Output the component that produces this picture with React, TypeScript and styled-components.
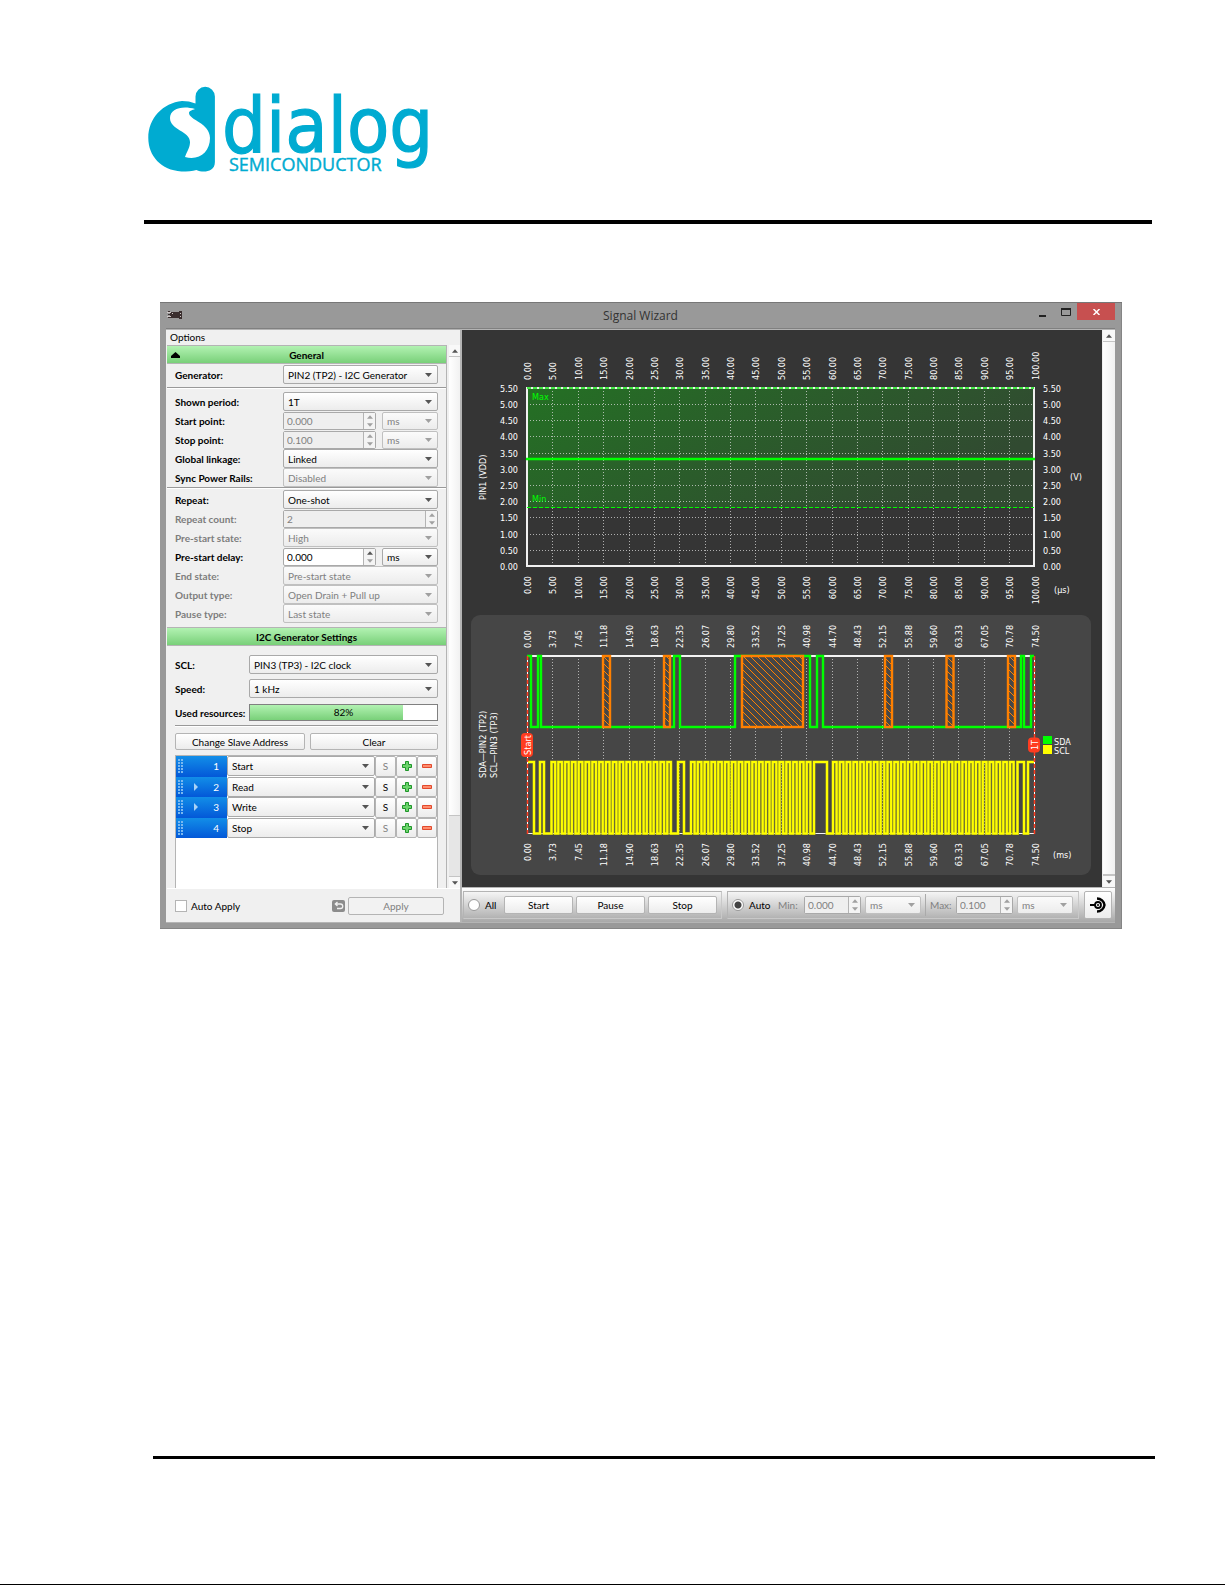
import React from "react";
import styled, { createGlobalStyle, css } from "styled-components";

const GlobalStyle = createGlobalStyle`
  *, *::before, *::after { box-sizing: border-box; }
  body { margin: 0; background: #fff; }
  button, input, select { font: inherit; color: inherit; margin: 0; }
`;

const uiFont = `Lato, "Open Sans", sans-serif`;
const plotFont = `"DejaVu Sans Condensed", "DejaVu Sans", sans-serif`;
const face = "linear-gradient(#ffffff, #ececec)";

/* ---------- document page ---------- */

const Page = styled.div`
  display: flex;
  flex-direction: column;
  min-height: 100vh;
  border-bottom: 1px solid #000;
  font-family: ${uiFont};
  font-size: 10px;
  line-height: 14px;
  color: #000;
`;

const PageHeader = styled.header`
  margin: 0 73px 0 144px;
  padding: 84px 0 42px 2px;
  border-bottom: 4px solid #000;
`;

const LogoSvg = styled.svg`
  display: block;
  width: 290px;
  height: 94px;
`;

const FooterRule = styled.hr`
  width: auto;
  height: 3px;
  margin: auto 70px 125px 153px;
  border: 0;
  background: #000;
`;

/* ---------- window ---------- */

const Window = styled.main`
  margin: 78px 103px 40px 160px;
  padding: 0 7px 6px 6px;
  background: #999;
  border-top: 1px solid #777;
  box-shadow: inset -1px -1px 0 #858585;
`;

const TitleBar = styled.div`
  display: grid;
  grid-template-columns: 1fr auto 1fr;
  height: 26px;
  border-bottom: 1px solid #808080;
`;

const TitleIcon = styled.svg`
  width: 16px;
  height: 10px;
  margin: 7px 0 0 1px;
`;

const Title = styled.h1`
  margin: 0;
  font: 400 12px/26px "Open Sans", sans-serif;
  color: #333;
`;

const WindowButtons = styled.div`
  display: flex;
  justify-content: flex-end;
`;

const WindowButton = styled.button<{ $close?: boolean }>`
  display: flex;
  align-items: center;
  justify-content: center;
  width: ${(p) => (p.$close ? 38 : 23)}px;
  height: 17px;
  padding: 0;
  border: 0;
  background: ${(p) => (p.$close ? "#c75050" : "transparent")};
`;

const Body = styled.div`
  display: flex;
  height: 594px;
  border: 1px solid #b4b4b4;
  border-width: 1px 0;
`;

/* ---------- left panel ---------- */

const SidePanel = styled.section`
  display: flex;
  flex-direction: column;
  width: 296px;
  flex: none;
  padding-left: 1px;
  background: #f0f0f0;
  border-right: 2px solid #b4b4b4;
`;

const MenuButton = styled.button`
  align-self: flex-start;
  height: 15px;
  padding: 0 3px;
  border: 0;
  background: none;
  line-height: 15px;
`;

const ScrollArea = styled.div`
  display: flex;
  flex: 1;
  min-height: 0;
  overflow: hidden;
`;

const Settings = styled.form`
  display: flex;
  flex-direction: column;
  flex: 1;
  border-right: 1px solid #b4b4b4;
`;

const SectionTitle = styled.h2`
  display: grid;
  grid-template-columns: 1fr auto 1fr;
  align-items: center;
  height: 19px;
  margin: 0;
  padding: 0 4px;
  font-size: 10px;
  font-weight: 700;
  background: linear-gradient(#b2f2b2, #79d079);
  border: 1px solid #b4b4b4;
  border-width: 1px 0;
`;

const Group = styled.div<{ $top?: number; $bottom?: number; $gap?: number }>`
  display: flex;
  flex-direction: column;
  gap: ${(p) => p.$gap ?? 0}px;
  padding: ${(p) => p.$top ?? 0}px 8px ${(p) => p.$bottom ?? 0}px 8px;
`;

const Divider = styled.hr<{ $inset?: boolean }>`
  width: auto;
  height: 2px;
  margin: ${(p) => (p.$inset ? "0 8px" : "0")};
  border: 0;
  border-top: 1px solid #999;
  background: #fff;
`;

const Row = styled.div<{ $label?: number; $muted?: boolean }>`
  display: grid;
  grid-template-columns: ${(p) => p.$label ?? 108}px 1fr;
  align-items: center;
  height: 19px;
  label { font-weight: 700; white-space: nowrap; color: ${(p) => (p.$muted ? "#7d7d7d" : "#000")}; }
`;

const Pair = styled.div`
  display: flex;
  gap: 6px;
`;

const SelectBox = styled.div<{ $width?: number; $off?: boolean }>`
  display: grid;
  grid-template-columns: 1fr 20px;
  align-items: center;
  ${(p) => (p.$width ? css`width: ${p.$width}px; flex: none;` : css`width: 100%;`)}
  min-width: 0;
  color: ${(p) => (p.$off ? "#808080" : "#000")};
  svg {
    grid-area: 1 / 2;
    justify-self: center;
    pointer-events: none;
    fill: ${(p) => (p.$off ? "#a0a0a0" : "#555")};
  }
`;

const SelectField = styled.select<{ $h?: number }>`
  grid-area: 1 / 1 / 2 / 3;
  appearance: none;
  width: 100%;
  height: ${(p) => p.$h ?? 19}px;
  padding: 0 16px 0 4px;
  border: 1px solid #a9a9a9;
  border-radius: 2px;
  background: ${face};
  opacity: 1;
  &:disabled { color: #808080; border-color: #c0c0c0; background: linear-gradient(#fbfbfb, #ececec); }
`;

const SpinBox = styled.div<{ $width?: number }>`
  display: flex;
  ${(p) => (p.$width ? css`width: ${p.$width}px; flex: none;` : css`width: 100%;`)}
  height: 18px;
  border: 1px solid #a9a9a9;
  border-radius: 2px;
  background: #fff;
`;

const SpinInput = styled.input`
  flex: 1;
  width: 0;
  padding: 0 3px;
  border: 0;
  background: none;
  &:disabled { color: #808080; background: #efefef; }
`;

const SpinButtons = styled.div`
  display: flex;
  flex-direction: column;
  width: 12px;
  border-left: 1px solid #b4b4b4;
  background: #f4f4f4;
`;

const SpinButton = styled.button`
  display: flex;
  flex: 1;
  align-items: center;
  justify-content: center;
  min-height: 0;
  padding: 0;
  border: 0;
  background: none;
  line-height: 0;
`;

const Progress = styled.div`
  display: grid;
  height: 17px;
  border: 1px solid #808080;
  background: #fff;
  text-align: center;
  line-height: 15px;
`;

const ProgressFill = styled.div`
  grid-area: 1 / 1;
  background: linear-gradient(#b2f2b2, #79d079);
`;

const ProgressText = styled.output`
  grid-area: 1 / 1;
`;

const Buttons = styled.div`
  display: grid;
  grid-template-columns: 130px 1fr;
  gap: 5px;
`;

const PushButton = styled.button<{ $w?: number; $h?: number }>`
  ${(p) => p.$w && css`width: ${p.$w}px;`}
  height: ${(p) => p.$h ?? 17}px;
  padding: 0;
  border: 1px solid #b4b4b4;
  border-radius: 2px;
  background: ${face};
  line-height: 14px;
  &:disabled { color: #808080; background: #f2f2f2; }
`;

const CommandList = styled.div`
  flex: 1;
  min-height: 0;
  margin: 5px 8px 0;
  border: 1px solid #b4b4b4;
  border-bottom: 0;
  background: #fff;
  overflow: hidden;
`;

const CommandRows = styled.div`
  display: grid;
  grid-auto-rows: 1fr;
  height: 82px;
`;

const CommandRow = styled.div`
  display: grid;
  grid-template-columns: 51px 1fr 21px 21px 20px;
`;

const CommandIndex = styled.div`
  display: grid;
  grid-template-columns: 16px 1fr auto;
  align-items: center;
  padding: 0 8px 0 2px;
  color: #fff;
  background: linear-gradient(#128ee8, #0358d8);
`;

const CommandButton = styled.button<{ $muted?: boolean }>`
  display: flex;
  align-items: center;
  justify-content: center;
  padding: 0;
  border: 1px solid #b4b4b4;
  border-radius: 2px;
  background: ${face};
  color: ${(p) => (p.$muted ? "#808080" : "#000")};
`;

const ApplyBar = styled.div`
  display: flex;
  align-items: center;
  height: 34px;
  padding: 0 16px 0 8px;
  border-top: 1px solid #fff;
`;

const CheckLabel = styled.label`
  display: flex;
  align-items: center;
  gap: 4px;
  flex: 1;
`;

const CheckInput = styled.input`
  appearance: none;
  width: 12px;
  height: 12px;
  border: 1px solid #b4b4b4;
  background: #fff;
`;

const IconButton = styled.button`
  display: flex;
  padding: 0;
  margin-right: 3px;
  border: 0;
  background: none;
`;

const ScrollTrack = styled.div`
  display: flex;
  flex-direction: column;
  width: 12px;
  flex: none;
  background: #e6e6e6;
`;

const ScrollSlot = styled.div<{ $gap: number }>`
  display: flex;
  flex: none;
  padding-left: ${(p) => p.$gap}px;
  background: #f0f0f0;
`;

const ScrollButton = styled.button`
  display: flex;
  align-items: center;
  justify-content: center;
  height: 12px;
  padding: 0;
  border: 1px solid #c4c4c4;
  border-width: 0 0 1px 0;
  background: #f8f8f8;
  &:last-child { border-width: 1px 0 0 0; margin-top: auto; }
`;

const ScrollThumb = styled.div<{ $grow: number }>`
  flex: ${(p) => p.$grow} 0 0;
  border-bottom: 1px solid #c4c4c4;
  background: linear-gradient(90deg, #fff, #f0f0f0);
`;

const ScrollRest = styled.div<{ $grow: number }>`
  flex: ${(p) => p.$grow} 0 0;
`;

/* ---------- right panel ---------- */

const PlotPanel = styled.section`
  display: flex;
  flex-direction: column;
  flex: 1;
  min-width: 0;
`;

const PlotScroll = styled.div`
  display: flex;
  flex: 1;
  min-height: 0;
  overflow: hidden;
`;

const Plots = styled.div`
  flex: 1;
  min-width: 0;
  background: #353535;
`;

const PlotSvg = styled.svg`
  display: block;
  width: 100%;
  height: auto;
  text { font-family: ${plotFont}; font-size: 9px; fill: #fff; }
`;

const LimitText = styled.text`
  && { fill: #0f0; }
`;

const PlotCard = styled.div`
  margin: 0 11px 0 9px;
  border-radius: 9px;
  background: #464646;
`;

const ControlBar = styled.div`
  display: flex;
  gap: 5px;
  height: 35px;
  padding: 3px 3px 3px 1px;
  border-top: 1px solid #b4b4b4;
  background: linear-gradient(#fff, #d8d8d8 45%, #a8a8a8);
`;

const ControlGroup = styled.div<{ $grow?: boolean }>`
  display: flex;
  align-items: center;
  gap: ${(p) => (p.$grow ? 4 : 3)}px;
  ${(p) => p.$grow && css`flex: 1;`}
  padding: 0 4px;
  border: 1px solid #b4b4b4;
  border-right-color: #c8c8c8;
  border-bottom-color: #c8c8c8;
`;

const RadioLabel = styled.label<{ $w: number }>`
  display: flex;
  align-items: center;
  gap: 5px;
  width: ${(p) => p.$w}px;
`;

const RadioInput = styled.input`
  appearance: none;
  width: 12px;
  height: 12px;
  border: 1px solid #999;
  border-radius: 50%;
  background: #fff;
  &:checked { background: radial-gradient(circle, #444 0 3px, #fff 4px); }
`;

const RangeLabel = styled.label`
  width: 22px;
  color: #808080;
`;

const RangeDivider = styled.span`
  align-self: stretch;
  width: 1px;
  margin: 2px 0;
  background: #aaa;
`;

const ToolButton = styled.button`
  display: flex;
  align-items: center;
  justify-content: center;
  width: 28px;
  padding: 0;
  border: 1px solid #b4b4b4;
  border-radius: 2px;
  background: ${face};
`;

/* ---------- small parts ---------- */

const Caret = ({ up, small }: { up?: boolean; small?: boolean }) => (
  <svg width={small ? 6 : 7} height="4" viewBox="0 0 7 4" fill="#555">
    <path d={up ? "M0 4 3.5 0 7 4z" : "M0 0h7L3.5 4z"} />
  </svg>
);

type ComboProps = { id?: string; value: string; off?: boolean; width?: number; h?: number; label?: string };

const Combo = ({ id, value, off, width, h, label }: ComboProps) => (
  <SelectBox $width={width} $off={off}>
    <SelectField id={id} disabled={off} $h={h} aria-label={label}>
      <option>{value}</option>
    </SelectField>
    <Caret />
  </SelectBox>
);

const Spin = ({ id, value, off, width }: ComboProps) => (
  <SpinBox $width={width}>
    <SpinInput id={id} defaultValue={value} disabled={off} />
    <SpinButtons>
      <SpinButton type="button" aria-label="Increase">
        <svg width="6" height="4" viewBox="0 0 7 4" fill={off ? "#a0a0a0" : "#555"}><path d="M0 4 3.5 0 7 4z" /></svg>
      </SpinButton>
      <SpinButton type="button" aria-label="Decrease">
        <svg width="6" height="4" viewBox="0 0 7 4" fill="#a0a0a0"><path d="M0 0h7L3.5 4z" /></svg>
      </SpinButton>
    </SpinButtons>
  </SpinBox>
);

const ScrollBar = ({ thumb, rest, gap }: { thumb: number; rest: number; gap: number }) => (
  <ScrollSlot $gap={gap}>
    <ScrollTrack>
      <ScrollButton type="button" aria-label="Scroll up"><Caret up small /></ScrollButton>
      <ScrollThumb $grow={thumb} />
      {rest > 0 && <ScrollRest $grow={rest} />}
      <ScrollButton type="button" aria-label="Scroll down"><Caret small /></ScrollButton>
    </ScrollTrack>
  </ScrollSlot>
);

const Grip = () => (
  <svg width="6" height="14" viewBox="0 0 6 14" fill="#7ab8f0">
    {[0, 3, 6, 9, 12].map((y) => <path key={y} d={`M0 ${y}h2v2H0zM3 ${y}h2v2H3z`} />)}
  </svg>
);

const Logo = () => (
  <LogoSvg viewBox="0 0 290 94" role="img" aria-label="Dialog Semiconductor">
    <g fill="#00abd1" stroke="#00abd1" strokeWidth="0">
      <path d="M49.5 19.5V12.5a9.7 9.7 0 0 1 19.4 0V78c0 7.5-6 9.5-11 9.5-3 0-5-.5-7.500-1.500-4 1-9 1.500-15 1.500C15 86 2.300 72 2.300 54 2.300 34 17 19 36 17c5 0 9 .8 13.500 2.500z" />
      <text x="76" y="68" fontFamily='"DejaVu Sans Condensed", "Noto Sans", sans-serif' fontSize="77" strokeWidth="1.2">dialog</text>
      <text x="83" y="87" fontFamily='"Open Sans", sans-serif' fontSize="18" strokeWidth="0.4">SEMICONDUCTOR</text>
    </g>
    <path fill="#fff" d="M49 25C36 21 24 25 24 34c0 12 20 13 20 24 0 6-3 9-5 15 14 4 25-5 25-19 0-15-21-18-21-25 0-2 3-3 6-4z" />
  </LogoSvg>
);

/* ---------- plots ---------- */

const ticks = Array.from({ length: 21 }, (_, i) => i);

const voltX = (i: number) => 65 + i * 25.375;
const voltY = (v: number) => 236 - v * 32.4;
const volts = Array.from({ length: 12 }, (_, i) => i * 0.5);

const Vertical = ({ x, y, end, children }: { x: number; y: number; end?: boolean; children: React.ReactNode }) => (
  <text transform={`translate(${x} ${y}) rotate(-90)`} textAnchor={end ? "end" : "start"}>{children}</text>
);

const VoltagePlot = () => (
  <PlotSvg viewBox="0 0 640 285" role="img" aria-label="PIN1 (VDD) voltage">
    <defs>
      <linearGradient id="band" x1="0" y1="0" x2="1" y2="0.4">
        <stop offset="0" stopColor="#247024" />
        <stop offset="1" stopColor="#314a31" />
      </linearGradient>
    </defs>
    <rect x="65" y="58" width="507" height="120" fill="url(#band)" />
    <g stroke="#d8d8d8" strokeOpacity="0.75" strokeDasharray="1 2">
      {ticks.slice(1, 20).map((i) => <path key={i} d={`M${Math.round(voltX(i)) + 0.5} 58V236`} />)}
      {volts.slice(1, 11).map((v) => <path key={v} d={`M65 ${Math.round(voltY(v)) + 0.5}H572`} />)}
    </g>
    <rect x="65" y="58" width="507" height="178" fill="none" stroke="#f0f0f0" strokeWidth="2" />
    <path d="M65 58H572" stroke="#44e844" strokeWidth="2" strokeDasharray="4 2" />
    <path d="M65 177.5H572" stroke="#0f0" strokeDasharray="4 2" />
    <path d="M64 129H573" stroke="#0f0" strokeWidth="2.5" />
    <LimitText x="70" y="70">Max</LimitText>
    <LimitText x="70" y="172">Min</LimitText>
    {ticks.map((i) => {
      const t = (i * 5).toFixed(2);
      return (
        <g key={i}>
          <Vertical x={voltX(i) + 4} y={50}>{t}</Vertical>
          <Vertical x={voltX(i) + 4} y={246} end>{t}</Vertical>
        </g>
      );
    })}
    {volts.map((v) => (
      <g key={v}>
        <text x="56" y={voltY(v) + 4} textAnchor="end">{v.toFixed(2)}</text>
        <text x="581" y={voltY(v) + 4}>{v.toFixed(2)}</text>
      </g>
    ))}
    <Vertical x={24} y={170}>PIN1 (VDD)</Vertical>
    <text x="608" y="150">(V)</text>
    <text x="592" y="263">(μs)</text>
  </PlotSvg>
);

const busLabels = [
  "0.00", "3.73", "7.45", "11.18", "14.90", "18.63", "22.35", "26.07", "29.80", "33.52", "37.25",
  "40.98", "44.70", "48.43", "52.15", "55.88", "59.60", "63.33", "67.05", "70.78", "74.50",
];
const busX = (i: number) => 56 + i * 25.375;

/* Each list holds the x positions at which the line changes level, starting high. */
const sdaEdges = [60, 67, 70, 203, 209, 264, 339, 346, 352, 550, 553, 560];
const clocks = (from: number, count: number) =>
  Array.from({ length: count }, (_, k) => [from + k * 6.81, from + k * 6.81 + 3.6]).flat();
const sclEdges = [
  63, 69, 73, ...clocks(80.5, 18), 207, 213, ...clocks(220, 18), 343, 356,
  ...clocks(362, 27), 546.5, 553, 557,
];

const wave = (edges: number[], high: number, low: number) => {
  let level = high;
  let d = `M56 ${high}`;
  edges.forEach((x) => {
    level = level === high ? low : high;
    d += `H${x}V${level}`;
  });
  return `${d}H563`;
};

const unknownBits = [[132, 7], [193, 6], [271, 61], [414, 7], [475.5, 7], [537, 7]];

const Marker = ({ x, y, h, children }: { x: number; y: number; h: number; children: string }) => (
  <g>
    <rect x={x - 6} y={y - h / 2} width="12" height={h} rx="4" fill="#ff3c20" />
    <text transform={`translate(${x + 4} ${y}) rotate(-90)`} textAnchor="middle">{children}</text>
  </g>
);

const BusPlot = () => (
  <PlotSvg viewBox="0 0 620 260" role="img" aria-label="I2C bus signals">
    <defs>
      <pattern id="hatch" width="7" height="7" patternUnits="userSpaceOnUse">
        <path d="M-1 -1 8 8M6 -1 8 1M-1 6 1 8" stroke="#ff8000" />
      </pattern>
    </defs>
    <g stroke="#d8d8d8" strokeOpacity="0.75" strokeDasharray="1 2">
      {ticks.slice(1, 20).map((i) => <path key={i} d={`M${Math.round(busX(i)) + 0.5} 41V218`} />)}
    </g>
    <path d="M56 41H563" stroke="#f4f4f4" strokeWidth="2" />
    <path d="M56 218.5H563" stroke="#f4f4f4" />
    <path d={wave(sdaEdges, 41, 112)} fill="none" stroke="#0f0" strokeWidth="2.4" />
    {unknownBits.map(([x, w]) => (
      <g key={x}>
        <rect x={x} y="41" width={w} height="71" fill="#464646" />
        <rect x={x} y="41" width={w} height="71" fill="url(#hatch)" stroke="#ff8000" strokeWidth="2.4" />
      </g>
    ))}
    <path d={wave(sclEdges, 147, 218.5)} fill="none" stroke="#a8a81c" strokeWidth="3" />
    <path d={wave(sclEdges, 147, 218.5)} fill="none" stroke="#ff0" strokeWidth="2" />
    {[56.5, 563.5].map((x) => (
      <g key={x}>
        <path d={`M${x} 41V219`} stroke="#fff" />
        <path d={`M${x} 41V219`} stroke="#ff3c20" strokeDasharray="4 2" strokeWidth="1.5" />
      </g>
    ))}
    <Marker x={56} y={130} h={24}>Start</Marker>
    <Marker x={563} y={130} h={15}>1T</Marker>
    {busLabels.map((t, i) => (
      <g key={t}>
        <Vertical x={busX(i) + 4} y={33}>{t}</Vertical>
        <Vertical x={busX(i) + 4} y={228} end>{t}</Vertical>
      </g>
    ))}
    <Vertical x={15} y={163}>SDA—PIN2 (TP2)</Vertical>
    <Vertical x={26} y={163}>SCL—PIN3 (TP3)</Vertical>
    <rect x="572" y="121" width="9" height="8" fill="#0f0" />
    <rect x="572" y="130" width="9" height="9" fill="#ff0" />
    <text x="583" y="130">SDA</text>
    <text x="583" y="139">SCL</text>
    <text x="582" y="243">(ms)</text>
  </PlotSvg>
);

/* ---------- settings data ---------- */

type Field = { id: string; label: string; value: string; off?: boolean; muted?: boolean; kind?: "spin" | "time" };

const viewFields: Field[] = [
  { id: "period", label: "Shown period:", value: "1T" },
  { id: "start", label: "Start point:", value: "0.000", off: true, kind: "time" },
  { id: "stop", label: "Stop point:", value: "0.100", off: true, kind: "time" },
  { id: "linkage", label: "Global linkage:", value: "Linked" },
  { id: "sync", label: "Sync Power Rails:", value: "Disabled", off: true },
];

const repeatFields: Field[] = [
  { id: "repeat", label: "Repeat:", value: "One-shot" },
  { id: "count", label: "Repeat count:", value: "2", off: true, muted: true, kind: "spin" },
  { id: "prestate", label: "Pre-start state:", value: "High", off: true, muted: true },
  { id: "delay", label: "Pre-start delay:", value: "0.000", kind: "time" },
  { id: "endstate", label: "End state:", value: "Pre-start state", off: true, muted: true },
  { id: "output", label: "Output type:", value: "Open Drain + Pull up", off: true, muted: true },
  { id: "pause", label: "Pause type:", value: "Last state", off: true, muted: true },
];

const commands = [
  { name: "Start", nested: false },
  { name: "Read", nested: true },
  { name: "Write", nested: true },
  { name: "Stop", nested: false },
];

const FieldRow = ({ id, label, value, off, muted, kind }: Field) => (
  <Row $muted={muted}>
    <label htmlFor={id}>{label}</label>
    {kind === "time" ? (
      <Pair>
        <Spin id={id} value={value} off={off} width={93} />
        <Combo value="ms" off={off} width={56} h={18} label={`${label} unit`} />
      </Pair>
    ) : kind === "spin" ? (
      <Spin id={id} value={value} off={off} />
    ) : (
      <Combo id={id} value={value} off={off} />
    )}
  </Row>
);

const usedResources = 82;

export default function App() {
  return (
    <Page>
      <GlobalStyle />
      <PageHeader>
        <Logo />
      </PageHeader>

      <Window>
        <TitleBar>
          <TitleIcon viewBox="0 0 16 10">
            <path d="M1 1h2v1H1zM1 4h2v1H1zM1 7h2v1H1zM3 2h9v6H3zM12 1h3v8h-3z" fill="#3a2e2e" />
            <path d="M0 2h4v1H0zM0 6h4v1H0zM5 3h1v1H5zM13 3h1v1h-1zM13 6h1v1h-1z" fill="#d0c8c8" />
          </TitleIcon>
          <Title>Signal Wizard</Title>
          <WindowButtons>
            <WindowButton type="button" aria-label="Minimize">
              <svg width="7" height="10" viewBox="0 0 7 10"><path d="M0 8h7v2H0z" fill="#222" /></svg>
            </WindowButton>
            <WindowButton type="button" aria-label="Maximize">
              <svg width="10" height="8" viewBox="0 0 10 8">
                <path d="M.5 1h9v6.5h-9z" fill="none" stroke="#222" />
                <path d="M0 0h10v2H0z" fill="#222" />
              </svg>
            </WindowButton>
            <WindowButton type="button" aria-label="Close" $close>
              <svg width="7" height="6" viewBox="0 0 7 6"><path d="M.5 0l6 6M6.5 0l-6 6" stroke="#fff" strokeWidth="1.5" /></svg>
            </WindowButton>
          </WindowButtons>
        </TitleBar>

        <Body>
          <SidePanel>
            <MenuButton type="button">Options</MenuButton>
            <ScrollArea>
              <Settings>
                <SectionTitle>
                  <svg width="9" height="6" viewBox="0 0 9 6"><path d="M0 6V4L4.5 0 9 4v2z" /></svg>
                  General
                </SectionTitle>
                <Group $top={1} $bottom={3}>
                  <FieldRow id="generator" label="Generator:" value="PIN2 (TP2) - I2C Generator" />
                </Group>
                <Divider />
                <Group $top={3}>{viewFields.map((f) => <FieldRow key={f.id} {...f} />)}</Group>
                <Divider />
                <Group $top={1} $bottom={4}>{repeatFields.map((f) => <FieldRow key={f.id} {...f} />)}</Group>
                <SectionTitle>
                  <i />
                  I2C Generator Settings
                </SectionTitle>
                <Group $top={9} $bottom={3} $gap={5}>
                  <Row $label={74}>
                    <label htmlFor="scl">SCL:</label>
                    <Combo id="scl" value="PIN3 (TP3) - I2C clock" />
                  </Row>
                  <Row $label={74}>
                    <label htmlFor="speed">Speed:</label>
                    <Combo id="speed" value="1 kHz" />
                  </Row>
                  <Row $label={74}>
                    <label htmlFor="used">Used resources:</label>
                    <Progress>
                      <ProgressFill style={{ width: `${usedResources}%` }} />
                      <ProgressText id="used">{usedResources}%</ProgressText>
                    </Progress>
                  </Row>
                </Group>
                <Divider $inset />
                <Group $top={6}>
                  <Buttons>
                    <PushButton type="button">Change Slave Address</PushButton>
                    <PushButton type="button">Clear</PushButton>
                  </Buttons>
                </Group>
                <CommandList>
                  <CommandRows>
                    {commands.map((c, i) => (
                      <CommandRow key={c.name}>
                        <CommandIndex>
                          <Grip />
                          <svg width="4" height="8" viewBox="0 0 4 8">
                            {c.nested && <path d="M0 0l4 4-4 4z" fill="#a8d2f6" />}
                          </svg>
                          {i + 1}
                        </CommandIndex>
                        <Combo value={c.name} h={20} label={`Command ${i + 1}`} />
                        <CommandButton type="button" $muted={!c.nested}>S</CommandButton>
                        <CommandButton type="button" aria-label="Add command">
                          <svg width="10" height="10" viewBox="0 0 10 10">
                            <path d="M3.5.5h3v3h3v3h-3v3h-3v-3h-3v-3h3z" fill="#6cd46c" stroke="#1f962a" />
                          </svg>
                        </CommandButton>
                        <CommandButton type="button" aria-label="Remove command">
                          <svg width="10" height="4" viewBox="0 0 10 4">
                            <path d="M.5.5h9v3h-9z" fill="#ff8d6e" stroke="#e2492c" />
                          </svg>
                        </CommandButton>
                      </CommandRow>
                    ))}
                  </CommandRows>
                </CommandList>
              </Settings>
              <ScrollBar thumb={459} rest={60} gap={2} />
            </ScrollArea>
            <ApplyBar>
              <CheckLabel>
                <CheckInput type="checkbox" />
                Auto Apply
              </CheckLabel>
              <IconButton type="button" aria-label="Revert">
                <svg width="13" height="12" viewBox="0 0 13 12">
                  <rect width="13" height="12" rx="2" fill="#8c8c8c" />
                  <path d="M3 4h5.5a2 2 0 0 1 0 4.5H5M5.5 2 3.3 4l2.2 2" fill="none" stroke="#f0f0f0" strokeWidth="1.3" />
                </svg>
              </IconButton>
              <PushButton type="button" disabled $w={96} $h={18}>Apply</PushButton>
            </ApplyBar>
          </SidePanel>

          <PlotPanel>
            <PlotScroll>
              <Plots>
                <VoltagePlot />
                <PlotCard>
                  <BusPlot />
                </PlotCard>
              </Plots>
              <ScrollBar thumb={1} rest={0} gap={1} />
            </PlotScroll>
            <ControlBar>
              <ControlGroup>
                <RadioLabel $w={33}>
                  <RadioInput type="radio" name="scope" />
                  All
                </RadioLabel>
                <PushButton type="button" $w={69} $h={18}>Start</PushButton>
                <PushButton type="button" $w={69} $h={18}>Pause</PushButton>
                <PushButton type="button" $w={69} $h={18}>Stop</PushButton>
              </ControlGroup>
              <ControlGroup $grow>
                <RadioLabel $w={42}>
                  <RadioInput type="radio" name="range" defaultChecked />
                  Auto
                </RadioLabel>
                <RangeLabel htmlFor="min">Min:</RangeLabel>
                <Spin id="min" value="0.000" off width={57} />
                <Combo value="ms" off width={56} h={18} label="Minimum unit" />
                <RangeDivider />
                <RangeLabel htmlFor="max">Max:</RangeLabel>
                <Spin id="max" value="0.100" off width={57} />
                <Combo value="ms" off width={56} h={18} label="Maximum unit" />
              </ControlGroup>
              <ToolButton type="button" aria-label="Fit view">
                <svg width="16" height="16" viewBox="0 0 16 16" fill="none" stroke="#000">
                  <path d="M7 1.5c4 0 7 3 7.5 6.5-.5 3.5-3.5 6.5-7.5 6.5" strokeWidth="2.4" />
                  <circle cx="8" cy="8" r="3" strokeWidth="1.8" />
                  <path d="M0 8h5" strokeWidth="2" />
                  <circle cx="8" cy="8" r="1" fill="#000" stroke="none" />
                </svg>
              </ToolButton>
            </ControlBar>
          </PlotPanel>
        </Body>
      </Window>

      <FooterRule />
    </Page>
  );
}
